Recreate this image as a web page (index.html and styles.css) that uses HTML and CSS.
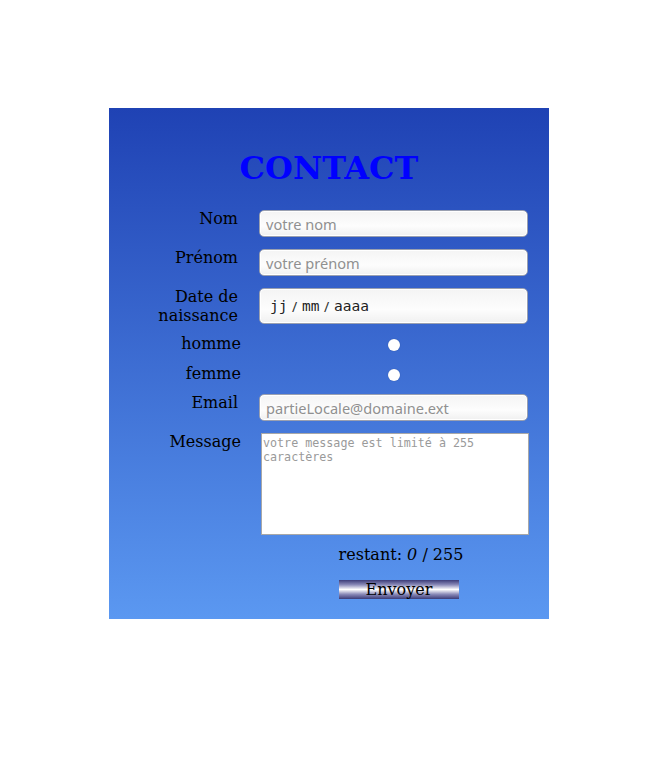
FILE: index.html
```html
<!DOCTYPE html>
<html lang="fr">
<head>
<meta charset="utf-8">
<title>Contact</title>
<link rel="stylesheet" href="styles.css">
</head>
<body>
<form class="panel">
  <h1 class="title">CONTACT</h1>
  <div class="grid">
    <label class="lbl">Nom</label>
    <div class="field"><input class="txt" type="text" placeholder="votre nom"></div>

    <label class="lbl">Prénom</label>
    <div class="field"><input class="txt" type="text" placeholder="votre prénom"></div>

    <label class="lbl">Date de<br>naissance</label>
    <div class="field"><div class="txt date"><span class="seg">jj</span><span class="sep"> / </span><span class="seg">mm</span><span class="sep"> / </span><span class="seg">aaaa</span></div></div>

    <label class="lbl lbl-radio first">homme</label>
    <div class="field radio-cell first"><span class="radio"></span></div>

    <label class="lbl lbl-radio">femme</label>
    <div class="field radio-cell"><span class="radio"></span></div>

    <label class="lbl">Email</label>
    <div class="field"><input class="txt" type="text" placeholder="partieLocale@domaine.ext"></div>

    <label class="lbl lbl-msg">Message</label>
    <div class="field"><textarea class="area" placeholder="votre message est limité à 255 caractères"></textarea></div>
  </div>
  <p class="count">restant: <em>0</em> / 255</p>
  <div class="actions"><button class="send" type="button">Envoyer</button></div>
</form>
</body>
</html>
```
FILE: styles.css
```css
* { box-sizing: border-box; }
html, body { margin: 0; padding: 0; background: #fff; }
body { padding: 108px 0 0 109px; font-family: "DejaVu Serif", serif; }

.panel {
  width: 440px;
  height: 511px;
  background: linear-gradient(to bottom, #1f42b4 0%, #5b98f1 100%);
  padding-top: 40px;
}
.title {
  margin: 0;
  text-align: center;
  color: #0000ff;
  font-family: "DejaVu Serif", serif;
  font-weight: bold;
  font-size: 32px;
  line-height: 40px;
  height: 62px;
}
.grid {
  display: grid;
  grid-template-columns: 130px 270px;
  column-gap: 20px;
  row-gap: 12px;
  align-items: start;
}
.lbl {
  text-align: right;
  font-size: 16px;
  line-height: 19px;
  color: #000;
  padding-right: 1px;
  display: block;
  margin: -1px 0 1px;
}
.lbl-radio, .lbl-msg { padding-right: 0; margin-right: -2px; }
.lbl-radio { line-height: 18px; margin-top: 1px; margin-bottom: -1px; }
.lbl-msg { margin-top: 0; line-height: 17px; }
.radio-cell.first { margin-top: -4px; }
.lbl-radio.first { margin-top: -3px; }
.field { display: flex; }
.txt {
  width: 269px;
  height: 27px;
  border: 1px solid #9aa0b0;
  box-shadow: inset 0 0 0 1px #ffffff;
  border-radius: 5px;
  background: linear-gradient(to bottom, #f4f4f4, #fdfdfd 60%, #f0f0f0);
  font-family: "Noto Sans", "DejaVu Sans", sans-serif;
  font-size: 14.6px;
  padding: 0 6px;
  color: #333;
  outline: none;
}
.txt::placeholder { color: #909090; }
.date {
  height: 36px;
  display: flex;
  align-items: center;
  padding-left: 10px;
  color: #222;
}
.seg {
  font-family: "DejaVu Sans Mono", monospace;
  font-size: 14.5px;
}
.sep {
  font-family: "Noto Sans", "DejaVu Sans", sans-serif;
  font-size: 14px;
  white-space: pre;
  padding: 0 1px;
  color: #333;
}
.radio-cell { justify-content: center; height: 18px; align-items: center; }
.radio {
  width: 12px;
  height: 12px;
  border-radius: 50%;
  background: #fff;
  box-shadow: 0 0 1px rgba(0,0,0,0.3);
  margin-top: 3px;
}
.area {
  margin-left: 2px;
  width: 268px;
  height: 102px;
  border: 1px solid #a8a8a8;
  background: #fff;
  font-family: "DejaVu Sans Mono", monospace;
  font-size: 11.7px;
  line-height: 14px;
  padding: 2px 1px;
  resize: none;
  outline: none;
}
.area::placeholder { color: #9a9a9a; }
.count {
  margin: 9px 0 0 152px;
  text-align: center;
  width: 280px;
  font-size: 16px;
  line-height: 22px;
}
.count em { font-style: italic; }
.actions {
  margin: 14px 0 0 230px;
  width: 120px;
}
.send {
  display: block;
  width: 120px;
  height: 19px;
  padding: 0;
  border: none;
  font-family: "DejaVu Serif", serif;
  font-size: 16px;
  line-height: 19px;
  color: #000;
  background: linear-gradient(to bottom, #3b3b78 0%, #8a8ab8 25%, #ffffff 50%, #8a8ab8 75%, #3b3b78 100%);
}
```
